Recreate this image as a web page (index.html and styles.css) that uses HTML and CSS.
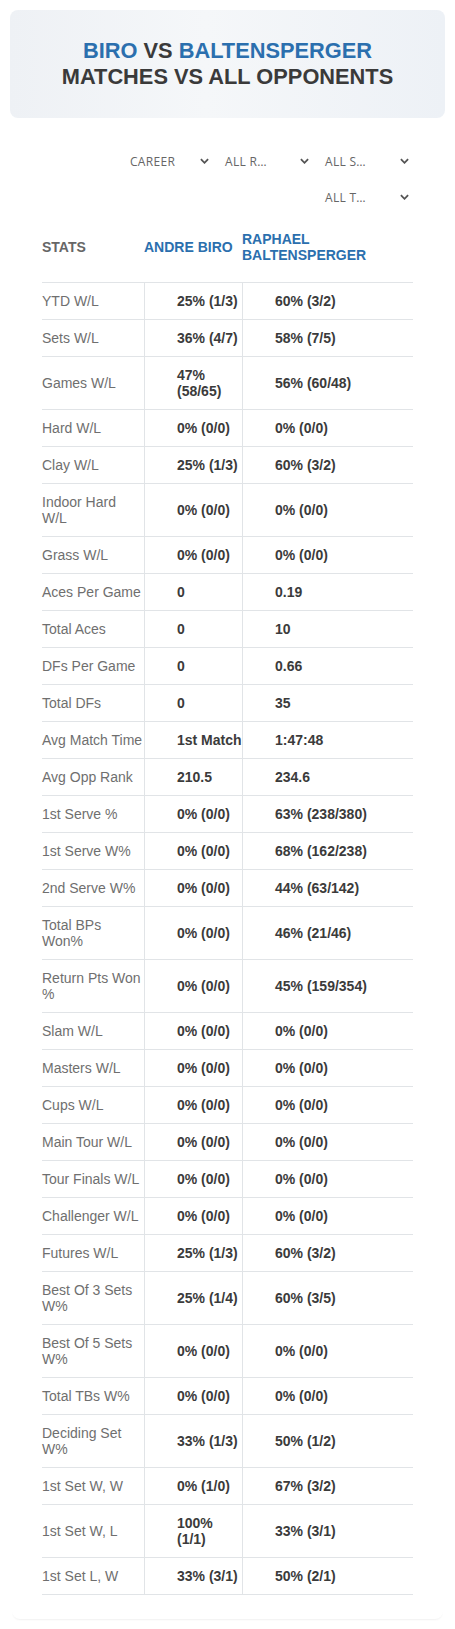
FILE: index.html
```html
<!DOCTYPE html>
<html lang="en">
  <head>
    <meta charset="UTF-8" />
    <meta name="viewport" content="width=device-width, initial-scale=1.0" />
    <title>Biro vs Baltensperger</title>
    <link rel="stylesheet" href="styles.css">
  </head>
  <body>
    <div class="hero">
      <h1>
        <span class="player">BIRO</span> VS <span class="player">BALTENSPERGER</span><br />
        MATCHES VS ALL OPPONENTS
      </h1>
    </div>

    <div class="stats-card">
      <div class="filters">
        <div class="select select-first"><span>CAREER</span><svg viewBox="0 0 10 6"><polyline points="1,1 5,5 9,1" /></svg></div>
        <div class="select"><span>ALL R…</span><svg viewBox="0 0 10 6"><polyline points="1,1 5,5 9,1" /></svg></div>
        <div class="select"><span>ALL S…</span><svg viewBox="0 0 10 6"><polyline points="1,1 5,5 9,1" /></svg></div>
        <div class="select"><span>ALL T…</span><svg viewBox="0 0 10 6"><polyline points="1,1 5,5 9,1" /></svg></div>
      </div>

      <table class="stats-table">
        <thead>
          <tr>
            <th class="col-stat">STATS</th>
            <th class="col-p1 player-head">ANDRE BIRO</th>
            <th class="col-p2 player-head">RAPHAEL BALTENSPERGER</th>
          </tr>
        </thead>
        <tbody id="statsBody">
          <!-- filas generadas abajo -->
        </tbody>
      </table>
    </div>

    <script>
      const stats = [
        ["YTD W/L", "25% (1/3)", "60% (3/2)"],
        ["Sets W/L", "36% (4/7)", "58% (7/5)"],
        ["Games W/L", "47% (58/65)", "56% (60/48)"],
        ["Hard W/L", "0% (0/0)", "0% (0/0)"],
        ["Clay W/L", "25% (1/3)", "60% (3/2)"],
        ["Indoor Hard W/L", "0% (0/0)", "0% (0/0)"],
        ["Grass W/L", "0% (0/0)", "0% (0/0)"],
        ["Aces Per Game", "0", "0.19"],
        ["Total Aces", "0", "10"],
        ["DFs Per Game", "0", "0.66"],
        ["Total DFs", "0", "35"],
        ["Avg Match Time", "1st Match", "1:47:48"],
        ["Avg Opp Rank", "210.5", "234.6"],
        ["1st Serve %", "0% (0/0)", "63% (238/380)"],
        ["1st Serve W%", "0% (0/0)", "68% (162/238)"],
        ["2nd Serve W%", "0% (0/0)", "44% (63/142)"],
        ["Total BPs Won%", "0% (0/0)", "46% (21/46)"],
        ["Return Pts Won %", "0% (0/0)", "45% (159/354)"],
        ["Slam W/L", "0% (0/0)", "0% (0/0)"],
        ["Masters W/L", "0% (0/0)", "0% (0/0)"],
        ["Cups W/L", "0% (0/0)", "0% (0/0)"],
        ["Main Tour W/L", "0% (0/0)", "0% (0/0)"],
        ["Tour Finals W/L", "0% (0/0)", "0% (0/0)"],
        ["Challenger W/L", "0% (0/0)", "0% (0/0)"],
        ["Futures W/L", "25% (1/3)", "60% (3/2)"],
        ["Best Of 3 Sets W%", "25% (1/4)", "60% (3/5)"],
        ["Best Of 5 Sets W%", "0% (0/0)", "0% (0/0)"],
        ["Total TBs W%", "0% (0/0)", "0% (0/0)"],
        ["Deciding Set W%", "33% (1/3)", "50% (1/2)"],
        ["1st Set W, W", "0% (1/0)", "67% (3/2)"],
        ["1st Set W, L", "100% (1/1)", "33% (3/1)"],
        ["1st Set L, W", "33% (3/1)", "50% (2/1)"],
      ];

      const statsBody = document.getElementById("statsBody");

      stats.forEach(([label, p1, p2]) => {
        const row = document.createElement("tr");
        row.innerHTML = `
          <td class="stat-label">${label}</td>
          <td class="stat-value">${p1}</td>
          <td class="stat-value">${p2}</td>
        `;
        statsBody.appendChild(row);
      });
    </script>
  </body>
</html>
```

FILE: styles.css
```css
:root {
  --blue: #2b6fae;
  --text-dark: #3b3b3b;
  --text-muted: #6f6f6f;
  --line: #e1e4e7;
}

* {
  box-sizing: border-box;
}

body {
  margin: 0;
  padding: 10px;
  background-color: #fff;
  font-family: "Liberation Sans", Arial, sans-serif;
  color: var(--text-dark);
}

.hero {
  padding: 28px 10px;
  border-radius: 8px;
  background: linear-gradient(90deg, #eef1f5 0%, #f5f7f9 45%, #edf1f6 100%);
  text-align: center;
}

.hero h1 {
  margin: 0;
  font-size: 21.8px;
  line-height: 26px;
  font-weight: bold;
  color: #3a3a3a;
}

.player {
  color: var(--blue);
}

.stats-card {
  margin: 8px 2px 0;
  padding: 20px 30px 24px;
  border-radius: 8px;
  background-color: #fff;
  box-shadow: 0 2px 2px -1px rgba(0, 0, 0, 0.06);
}

.filters {
  display: flex;
  flex-wrap: wrap;
  justify-content: flex-end;
  gap: 6px 5px;
}

.select {
  display: flex;
  align-items: center;
  justify-content: space-between;
  width: 95px;
  height: 30px;
  padding: 0 4px 0 7px;
  font-family: "Open Sans", sans-serif;
  font-size: 12px;
  letter-spacing: 0.3px;
  color: #666;
}

.select-first {
  padding-left: 12px;
}

.select svg {
  width: 9px;
  height: 6px;
  fill: none;
  stroke: #555;
  stroke-width: 2;
}

.stats-table {
  width: 100%;
  border-collapse: separate;
  border-spacing: 0;
  table-layout: fixed;
  font-size: 14px;
}

.stats-table th {
  padding: 19px 0;
  text-align: left;
  vertical-align: middle;
  font-weight: bold;
  border-bottom: 1px solid var(--line);
}

.col-stat {
  width: 102px;
  color: #666;
}

.col-p1 {
  width: 98px;
}

.player-head {
  color: var(--blue);
}

.stats-table td {
  padding: 10px 0;
  vertical-align: middle;
  border-bottom: 1px solid var(--line);
}

.stat-label {
  color: var(--text-muted);
}

.stat-value {
  padding-left: 32px !important;
  border-left: 1px solid var(--line);
  font-weight: bold;
  color: var(--text-dark);
}
```
